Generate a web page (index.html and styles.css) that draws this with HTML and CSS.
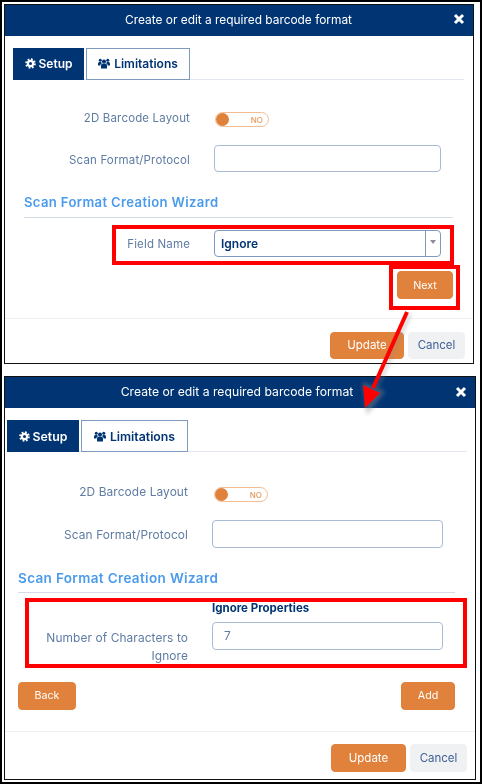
FILE: index.html
```html
<!DOCTYPE html>
<html lang="en">
<head>
    <meta charset="UTF-8">
    <title>Create or edit a required barcode format</title>
    <link rel="stylesheet" href="styles.css">
</head>
<body>
    <div class="page">
        <!-- First step -->
        <section class="modal modal-first">
            <header class="modal-header">
                <span class="modal-title">Create or edit a required barcode format</span>
                <svg class="close-icon" viewBox="0 0 12 12"><path d="M2 2l8 8M10 2l-8 8"/></svg>
            </header>
            <div class="modal-body">
                <div class="tabs">
                    <a class="tab tab-active">
                        <svg class="tab-icon" viewBox="0 0 16 16"><circle class="gear-teeth" cx="8" cy="8" r="6"/><path d="M8 2.600a5.400 5.400 0 1 0 0 10.800A5.400 5.400 0 0 0 8 2.600zm0 3.200a2.200 2.200 0 1 1 0 4.400 2.200 2.200 0 0 1 0-4.400z" fill-rule="evenodd"/></svg>
                        Setup
                    </a>
                    <a class="tab">
                        <svg class="tab-icon tab-icon-wide" viewBox="0 0 16 14"><circle cx="8" cy="4.200" r="2.700"/><circle cx="3" cy="2.600" r="2"/><circle cx="13" cy="2.600" r="2"/><path d="M4 13.500V9.800a2.800 2.800 0 0 1 2.800-2.800h2.400A2.800 2.800 0 0 1 12 9.800v3.700zM0 9.500V7a2 2 0 0 1 2-2h2.300a3.800 3.800 0 0 0 1 1.700A3.900 3.900 0 0 0 3 9.500zM16 9.500V7a2 2 0 0 0-2-2h-2.300a3.800 3.800 0 0 1-1 1.700A3.900 3.900 0 0 1 13 9.500z"/></svg>
                        Limitations
                    </a>
                </div>
                <div class="form-row row-toggle">
                    <label class="form-label">2D Barcode Layout</label>
                    <div class="toggle"><span class="toggle-knob"></span><span class="toggle-text">NO</span></div>
                </div>
                <div class="form-row row-scan">
                    <label class="form-label">Scan Format/Protocol</label>
                    <div class="text-input"></div>
                </div>
                <h3 class="wizard-title">Scan Format Creation Wizard</h3>
                <div class="form-row row-field">
                    <label class="form-label">Field Name</label>
                    <div class="text-input select-input">
                        <span class="select-value">Ignore</span>
                        <span class="select-arrow"></span>
                    </div>
                </div>
                <div class="wizard-actions wizard-actions-end">
                    <button class="btn btn-orange btn-next">Next</button>
                </div>
            </div>
            <footer class="modal-footer">
                <button class="btn btn-orange btn-update">Update</button>
                <button class="btn btn-grey">Cancel</button>
            </footer>
        </section>

        <!-- Second step -->
        <section class="modal modal-second">
            <header class="modal-header">
                <span class="modal-title">Create or edit a required barcode format</span>
                <svg class="close-icon" viewBox="0 0 12 12"><path d="M2 2l8 8M10 2l-8 8"/></svg>
            </header>
            <div class="modal-body">
                <div class="tabs">
                    <a class="tab tab-active">
                        <svg class="tab-icon" viewBox="0 0 16 16"><circle class="gear-teeth" cx="8" cy="8" r="6"/><path d="M8 2.600a5.400 5.400 0 1 0 0 10.800A5.400 5.400 0 0 0 8 2.600zm0 3.200a2.200 2.200 0 1 1 0 4.400 2.200 2.200 0 0 1 0-4.400z" fill-rule="evenodd"/></svg>
                        Setup
                    </a>
                    <a class="tab">
                        <svg class="tab-icon tab-icon-wide" viewBox="0 0 16 14"><circle cx="8" cy="4.200" r="2.700"/><circle cx="3" cy="2.600" r="2"/><circle cx="13" cy="2.600" r="2"/><path d="M4 13.500V9.800a2.800 2.800 0 0 1 2.800-2.800h2.400A2.800 2.800 0 0 1 12 9.800v3.700zM0 9.500V7a2 2 0 0 1 2-2h2.300a3.800 3.800 0 0 0 1 1.700A3.900 3.900 0 0 0 3 9.500zM16 9.500V7a2 2 0 0 0-2-2h-2.300a3.800 3.800 0 0 1-1 1.700A3.900 3.900 0 0 1 13 9.500z"/></svg>
                        Limitations
                    </a>
                </div>
                <div class="form-row row-toggle">
                    <label class="form-label">2D Barcode Layout</label>
                    <div class="toggle"><span class="toggle-knob"></span><span class="toggle-text">NO</span></div>
                </div>
                <div class="form-row row-scan">
                    <label class="form-label">Scan Format/Protocol</label>
                    <div class="text-input"></div>
                </div>
                <h3 class="wizard-title">Scan Format Creation Wizard</h3>
                <div class="properties">
                    <h4 class="properties-title">Ignore Properties</h4>
                    <div class="form-row row-chars">
                        <label class="form-label">Number of Characters to Ignore</label>
                        <div class="text-input"><span class="input-value">7</span></div>
                    </div>
                </div>
                <div class="wizard-actions">
                    <button class="btn btn-orange btn-back">Back</button>
                    <button class="btn btn-orange btn-add">Add</button>
                </div>
            </div>
            <footer class="modal-footer">
                <button class="btn btn-orange btn-update">Update</button>
                <button class="btn btn-grey">Cancel</button>
            </footer>
        </section>

        <!-- Annotations drawn over the screenshots -->
        <div class="callout callout-field"></div>
        <div class="callout callout-next"></div>
        <div class="callout callout-props"></div>
        <svg class="arrow" viewBox="0 0 482 784">
            <path class="arrow-shadow" d="M410 314L376 389M383 392L368 411L364 384z"/>
            <path class="arrow-line" d="M407 312L373 388"/>
            <path class="arrow-head" d="M380 393L365 408L363 385z"/>
        </svg>
    </div>
</body>
</html>
```

FILE: styles.css
```css
/* ===== Page ===== */
* {
    box-sizing: border-box;
}

body {
    margin: 0;
    font-family: 'Inter', 'Liberation Sans', sans-serif;
    background: white;
}

.page {
    position: relative;
    width: 482px;
    height: 784px;
    border: 2px solid black;
    padding: 2px;
    display: flex;
    flex-direction: column;
    gap: 12px;
    overflow: hidden;
}

/* ===== Modal ===== */
.modal {
    display: flex;
    flex-direction: column;
    border: 1px solid #111;
    background: white;
    filter: blur(0.3px); /* the reference is a scaled-up capture */
}

.modal-first {
    width: 470px;
    height: 360px;
}

.modal-second {
    width: 472px;
    height: 405px;
}

.modal-header {
    flex: none;
    height: 31px;
    display: flex;
    align-items: center;
    justify-content: center;
    position: relative;
    padding-bottom: 2px;
    background: #003473;
    color: white;
}

.modal-first .modal-header {
    padding-right: 1px;
    font-size: 11.9px;
}

.modal-second .modal-header {
    padding-right: 6px;
    font-size: 12.2px;
}

.close-icon {
    position: absolute;
    right: 8px;
    top: 8px;
    width: 12px;
    height: 12px;
    fill: none;
    stroke: white;
    stroke-width: 3;
}

.modal-second .close-icon {
    top: 9px;
}

.modal-body {
    flex: 1;
}

.modal-first .modal-body {
    padding: 12px 9px 0 8px;
}

.modal-second .modal-body {
    padding: 12px 8px 0 2px;
}

/* ===== Tabs ===== */
.tabs {
    display: flex;
    gap: 2px;
    height: 32px;
    border-bottom: 1px solid #e1e6ef;
}

.tab {
    display: flex;
    align-items: center;
    justify-content: center;
    gap: 3px;
    height: 32px;
    border: 1px solid #7f9abf;
    color: #003473;
    font-size: 12px;
    font-weight: 600;
}

.modal-first .tab {
    padding-bottom: 2px;
}

.modal-second .tab {
    padding-top: 1px;
    font-size: 12.3px;
}

.tab-active {
    width: 71px;
    background: #003473;
    border-color: #003473;
    color: white;
}

.tab:not(.tab-active) {
    width: 104px;
}

.modal-second .tab-active {
    width: 72px;
}

.modal-second .tab:not(.tab-active) {
    width: 107px;
}

.tab-icon {
    width: 11px;
    height: 11px;
    fill: currentColor;
}

.tab-icon-wide {
    width: 12px;
    height: 11px;
    margin-right: 1px;
}

.gear-teeth {
    fill: none;
    stroke: currentColor;
    stroke-width: 3.4;
    stroke-dasharray: 2.4 2.31;
}

/* ===== Form rows ===== */
.form-row {
    display: flex;
    align-items: center;
    gap: 24px;
}

.form-label {
    flex: none;
    text-align: right;
    color: #5f7ca4;
    line-height: 18px;
}

.modal-first .form-label {
    width: 177px;
    font-size: 11.5px;
    letter-spacing: 0.15px;
}

.modal-second .form-label {
    width: 181px;
    font-size: 11.9px;
    letter-spacing: 0.1px;
}

.text-input {
    width: 227px;
    height: 27px;
    border: 1px solid #a9bbd4;
    border-radius: 4px;
    background: white;
    display: flex;
    align-items: center;
}

.modal-second .text-input {
    width: 231px;
    height: 28px;
}

.input-value {
    padding-left: 11px;
    color: #5f7ca4;
    font-size: 12px;
}

.row-toggle {
    height: 15px;
}

.modal-first .row-toggle {
    margin-top: 32px;
}

.modal-second .row-toggle {
    margin-top: 35px;
}

.modal-first .row-toggle .form-label {
    margin-top: -3px;
}

.modal-second .row-toggle .form-label {
    margin-top: -4px;
}

.row-scan .form-label {
    padding-top: 2px;
}

.row-scan {
    margin-top: 18px;
}

/* ===== Toggle ===== */
.toggle {
    position: relative;
    width: 54px;
    height: 15px;
    margin-left: 1px;
    border: 1px solid #f2bd92;
    border-radius: 8px;
}

.modal-second .toggle {
    margin-left: 2px;
}

.toggle-knob {
    position: absolute;
    left: 1px;
    top: 1px;
    width: 11px;
    height: 11px;
    border-radius: 50%;
    background: #e0823c;
    box-shadow: 0 0 0 1px #e0823c;
}

.toggle-text {
    position: absolute;
    right: 5px;
    top: 2px;
    color: #e79a5d;
    font-size: 8px;
    line-height: 10px;
    font-weight: 500;
}

/* ===== Wizard ===== */
.wizard-title {
    margin: 0;
    border-bottom: 1px solid #d5dce8;
    color: #4a9bec;
    font-weight: 600;
    letter-spacing: 0.35px;
    line-height: 16px;
}

.modal-first .wizard-title {
    margin: 22px 11px 0 11px;
    padding-bottom: 7px;
    font-size: 13.1px;
}

.modal-second .wizard-title {
    margin: 22px 12px 0 11px;
    padding-bottom: 6px;
    font-size: 13.5px;
}

.row-field {
    margin-top: 12px;
}

.select-input {
    justify-content: space-between;
    border-color: #7f9abf;
}

.select-value {
    padding-left: 6px;
    color: #003473;
    font-size: 12px;
    font-weight: 600;
}

.select-arrow {
    position: relative;
    width: 15px;
    height: 100%;
    border-left: 1px solid #7f9abf;
}

.select-arrow::after {
    content: "";
    position: absolute;
    left: 4px;
    top: 9px;
    border: 3px solid transparent;
    border-top: 4px solid #8a8f99;
}

.wizard-actions {
    display: flex;
    justify-content: space-between;
}

.wizard-actions-end {
    justify-content: flex-end;
    margin: 14px 11px 0 0;
}

.modal-second .wizard-actions {
    margin: 16px 12px 0 11px;
}

.properties-title {
    margin: 8px 0 7px 205px;
    color: #003473;
    font-size: 11.5px;
    font-weight: 700;
    line-height: 14px;
}

.row-chars {
    align-items: flex-start;
    height: 44px;
}

.row-chars .form-label {
    margin-top: 7px;
}

/* ===== Buttons ===== */
.btn {
    height: 28px;
    border-radius: 4px;
    border: 1px solid #e0823c;
    font-family: inherit;
    font-size: 10.7px;
    padding: 0;
}

.btn-orange {
    background: #e0823c;
    color: white;
}

.btn-grey {
    width: 57px;
    background: #f0f1f3;
    border-color: #f0f1f3;
    color: #3f6295;
    font-size: 11.5px;
}

.btn-next {
    width: 56px;
}

.btn-back {
    width: 58px;
}

.btn-add {
    width: 54px;
}

.btn-update {
    font-size: 11.5px;
}

.modal-first .btn-update {
    width: 74px;
}

.modal-second .btn-update {
    width: 75px;
}

/* ===== Footer ===== */
.modal-footer {
    flex: none;
    padding-right: 8px;
    display: flex;
    justify-content: flex-end;
    gap: 4px;
    border-top: 1px solid #f0f1f3;
}

.modal-first .modal-footer {
    height: 45px;
    padding-top: 13px;
}

.modal-first .modal-footer .btn {
    height: 27px;
}

.modal-second .modal-footer {
    height: 48px;
    padding-top: 12px;
}

/* ===== Red annotations ===== */
.callout {
    position: absolute;
    border: 4px solid #f00;
}

.callout-field {
    left: 110px;
    top: 223px;
    width: 342px;
    height: 40px;
}

.callout-next {
    left: 387px;
    top: 263px;
    width: 71px;
    height: 45px;
}

.callout-props {
    left: 23px;
    top: 596px;
    width: 442px;
    height: 70px;
}

.arrow {
    position: absolute;
    left: -2px;
    top: -2px;
    width: 482px;
    height: 784px;
    pointer-events: none;
}

.arrow-line {
    fill: none;
    stroke: #f00;
    stroke-width: 4;
}

.arrow-head {
    fill: #f00;
}

.arrow-shadow {
    fill: #888;
    stroke: #888;
    stroke-width: 3;
    opacity: 0.45;
    filter: blur(2px);
}
```
